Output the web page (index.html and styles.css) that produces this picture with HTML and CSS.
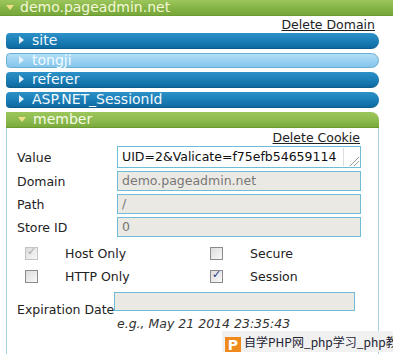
FILE: index.html
```html
<!DOCTYPE html>
<html lang="en">
<head>
    <meta charset="UTF-8">
    <title>Cookies</title>
    <link rel="stylesheet" href="styles.css">
</head>
<body>
    <div class="domain-bar"><span class="arrow-down"></span>demo.pageadmin.net</div>
    <div class="domain-actions"><a href="#">Delete Domain</a></div>

    <div class="cookie-list">
        <div class="cookie-bar"><span class="arrow-right"></span>site</div>
        <div class="cookie-bar light"><span class="arrow-right"></span>tongji</div>
        <div class="cookie-bar"><span class="arrow-right"></span>referer</div>
        <div class="cookie-bar"><span class="arrow-right"></span>ASP.NET_SessionId</div>
        <div class="cookie-bar open"><span class="arrow-down"></span>member</div>

        <div class="cookie-panel">
            <div class="cookie-actions"><a href="#">Delete Cookie</a></div>
            <div class="field">
                <label>Value</label>
                <div class="value-box">UID=2&amp;Valicate=f75efb54659114<span class="grip"></span></div>
            </div>
            <div class="field">
                <label>Domain</label>
                <div class="input disabled">demo.pageadmin.net</div>
            </div>
            <div class="field">
                <label>Path</label>
                <div class="input disabled">/</div>
            </div>
            <div class="field">
                <label>Store ID</label>
                <div class="input disabled">0</div>
            </div>

            <div class="checks">
                <div class="check"><span class="box checked dim"></span>Host Only</div>
                <div class="check"><span class="box"></span>Secure</div>
                <div class="check"><span class="box"></span>HTTP Only</div>
                <div class="check"><span class="box checked"></span>Session</div>
            </div>

            <div class="field expiry">
                <label>Expiration Date</label>
                <div class="input disabled short"></div>
            </div>
            <div class="hint">e.g., May 21 2014 23:35:43</div>
        </div>
    </div>

    <div class="watermark"><span class="wm-logo">P</span>自学PHP网_php学习_php教</div>
</body>
</html>
```

FILE: styles.css
```css
body {
    margin: 0;
    padding: 0;
    font-family: "DejaVu Sans", Verdana, sans-serif;
    font-size: 12.5px;
    color: #222;
    background: #fff;
    position: relative;
    height: 354px;
    overflow: hidden;
}

a {
    color: #222;
}

.domain-bar {
    height: 15px;
    line-height: 15px;
    padding-left: 6px;
    color: #f4f8d8;
    font-size: 14px;
    background: linear-gradient(#9cc65c, #82b243 60%, #77a63a);
    border-bottom: 1px solid #6c9a33;
    overflow: hidden;
}

.arrow-down {
    display: inline-block;
    width: 0;
    height: 0;
    border-left: 4px solid transparent;
    border-right: 4px solid transparent;
    border-top: 5px solid #f1e08a;
    margin: 0 6px 2px 0;
    vertical-align: middle;
}

.arrow-right {
    display: inline-block;
    width: 0;
    height: 0;
    border-top: 4px solid transparent;
    border-bottom: 4px solid transparent;
    border-left: 5px solid #e8f4fb;
    margin: 0 8px 2px 13px;
    vertical-align: middle;
}

.domain-actions {
    text-align: right;
    padding: 1px 18px 0 0;
    height: 16px;
}

.cookie-list {
    margin: 0 14px 0 6px;
}

.cookie-bar {
    height: 15px;
    line-height: 14px;
    margin-bottom: 4px;
    color: #f2f8fc;
    font-size: 14px;
    border-radius: 4px 8px 8px 4px;
    background: linear-gradient(#2d92c8, #1c7fb8 50%, #0d6aa0);
    border-bottom: 1px solid #0b5c8c;
}

.cookie-bar.light {
    background: linear-gradient(#b3dff6, #95cff0 60%, #84c5ea);
    border: 1px solid #6aaed3;
    height: 13px;
    line-height: 12px;
    color: #f4fbff;
}

.cookie-bar.light .arrow-right {
    margin-left: 12px;
}

.cookie-bar.open {
    margin-bottom: 0;
    border-radius: 0 8px 0 0;
    background: linear-gradient(#9cc65c, #8ab94d 60%, #7aa93c);
    border-bottom: 1px solid #6c9a33;
    color: #f8fbe8;
}

.cookie-bar.open .arrow-down {
    margin: 0 7px 2px 12px;
}

.cookie-panel {
    height: 224px;
    border: 1px solid #a9cfe0;
    border-top: none;
    border-radius: 0 0 4px 4px;
    padding: 4px 17px 0 10px;
}

.cookie-actions {
    text-align: right;
    height: 14px;
    line-height: 11px;
    padding-right: 1px;
}

.field {
    display: flex;
    align-items: center;
    margin-bottom: 3px;
}

.field label {
    width: 100px;
    flex-shrink: 0;
    white-space: nowrap;
    color: #222;
}

.input,
.value-box {
    box-sizing: border-box;
    width: 245px;
    height: 20px;
    line-height: 17px;
    padding-left: 4px;
    border: 1px solid #6ebcd8;
    background: #fff;
    color: #111;
}

.value-box {
    position: relative;
    height: 22px;
    line-height: 19px;
}

.grip {
    position: absolute;
    right: 1px;
    top: 1px;
    width: 15px;
    height: 18px;
    border-left: 1px solid #ddd;
    background: linear-gradient(135deg, transparent 70%, #777 72%, transparent 75%, transparent 82%, #777 84%, transparent 87%);
}

.input.disabled {
    background: #ebe9e4;
    color: #777;
}

.checks {
    display: grid;
    grid-template-columns: 185px auto;
    row-gap: 7px;
    padding: 5px 0 0 8px;
}

.check {
    display: flex;
    align-items: center;
    height: 16px;
}

.box {
    box-sizing: border-box;
    width: 13px;
    height: 13px;
    margin-right: 27px;
    border: 1px solid #8b8b8b;
    background: linear-gradient(135deg, #dcdcdc, #f8f8f8);
    position: relative;
}

.box.checked::after {
    content: "\2713";
    position: absolute;
    left: 1px;
    top: -3px;
    font-size: 11px;
    color: #22338a;
}

.box.dim {
    border-color: #c4c4c4;
}

.box.dim::after {
    color: #aaa;
}

.field.expiry {
    align-items: flex-end;
    margin-top: 8px;
    margin-bottom: 0;
}

.field.expiry label {
    width: auto;
}

.input.short {
    width: 241px;
    height: 19px;
    margin-bottom: 6px;
}

.hint {
    padding-left: 100px;
    font-style: italic;
    color: #333;
    margin-top: -1px;
}

.watermark {
    position: absolute;
    left: 222px;
    top: 331px;
    width: 171px;
    height: 21px;
    line-height: 21px;
    background: rgba(240, 240, 240, 0.92);
    font-family: "Noto Sans CJK SC", sans-serif;
    font-size: 12px;
    color: #223;
    white-space: nowrap;
    overflow: hidden;
}

.wm-logo {
    display: inline-block;
    width: 16px;
    height: 16px;
    line-height: 16px;
    margin: 0 3px 0 3px;
    vertical-align: -3px;
    background: #f08a1c;
    color: #fff;
    font-family: "DejaVu Sans", sans-serif;
    font-weight: bold;
    font-size: 14px;
    text-align: center;
}
```
